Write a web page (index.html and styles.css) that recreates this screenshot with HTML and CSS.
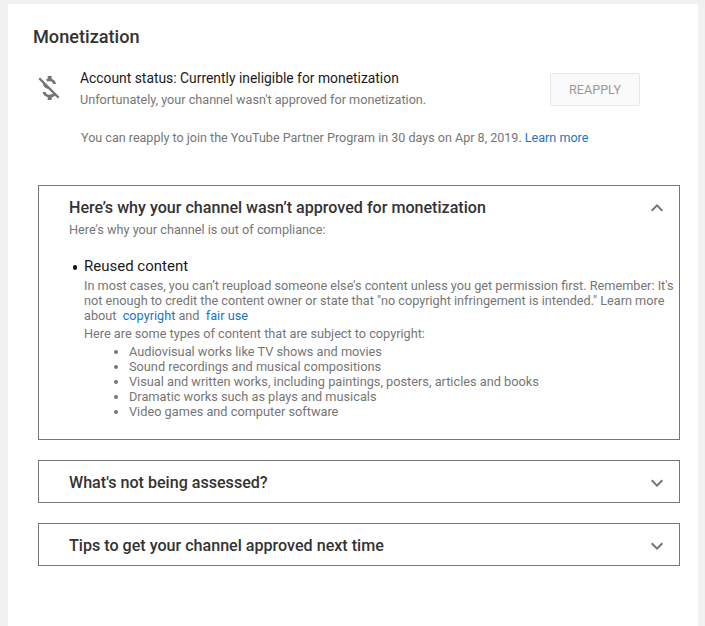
FILE: index.html
```html
<!DOCTYPE html>
<html lang="en">
<head>
<meta charset="utf-8">
<title>Monetization</title>
<link rel="stylesheet" href="styles.css">
</head>
<body>
<main class="card">
  <h1 class="title">Monetization</h1>
  <section class="status">
    <svg class="status-icon" viewBox="0 0 24 24" width="32" height="32"><path d="M12.5 6.9c1.78 0 2.44.85 2.5 2.1h2.21c-.07-1.72-1.12-3.3-3.21-3.81V3h-3v2.16c-.53.12-1.03.3-1.48.54l1.47 1.47c.41-.17.91-.27 1.51-.27zM5.33 4.06L4.06 5.33 7.5 8.77c0 2.08 1.56 3.21 3.91 3.91l3.51 3.51c-.34.48-1.05.91-2.42.91-2.06 0-2.87-.92-2.98-2.1h-2.2c.12 2.19 1.76 3.42 3.68 3.83V21h3v-2.15c.96-.18 1.83-.55 2.46-1.12l2.22 2.22 1.27-1.27L5.33 4.06z"/></svg>
    <div class="status-text">
      <div class="status-head">Account status: Currently ineligible for monetization</div>
      <div class="status-sub">Unfortunately, your channel wasn't approved for monetization.</div>
    </div>
    <button class="reapply" type="button" disabled>REAPPLY</button>
  </section>
  <p class="notice">You can reapply to join the YouTube Partner Program in 30 days on Apr 8, 2019. <a href="#">Learn more</a></p>

  <section class="panel panel-open">
    <div class="panel-head">
      <h2>Here’s why your channel wasn’t approved for monetization</h2>
      <svg class="chev" viewBox="0 0 24 24" width="24" height="24"><path d="M7.41 15.41L12 10.83l4.59 4.58L18 14l-6-6-6 6z"/></svg>
    </div>
    <p class="panel-sub">Here's why your channel is out of compliance:</p>
    <ul class="reasons">
      <li>
        <div class="reason-name">Reused content</div>
        <p class="reason-copy">In most cases, you can’t reupload someone else's content unless you get permission first. Remember: It's not enough to credit the content owner or state that "no copyright infringement is intended." Learn more about&nbsp; <a href="#">copyright</a> and&nbsp; <a href="#">fair use</a></p>
        <p class="reason-lead">Here are some types of content that are subject to copyright:</p>
        <ul class="types">
          <li>Audiovisual works like TV shows and movies</li>
          <li>Sound recordings and musical compositions</li>
          <li>Visual and written works, including paintings, posters, articles and books</li>
          <li>Dramatic works such as plays and musicals</li>
          <li>Video games and computer software</li>
        </ul>
      </li>
    </ul>
  </section>

  <section class="panel">
    <div class="panel-head">
      <h2>What's not being assessed?</h2>
      <svg class="chev" viewBox="0 0 24 24" width="24" height="24"><path d="M7.41 8.59L12 13.17l4.59-4.58L18 10l-6 6-6-6z"/></svg>
    </div>
  </section>

  <section class="panel">
    <div class="panel-head">
      <h2>Tips to get your channel approved next time</h2>
      <svg class="chev" viewBox="0 0 24 24" width="24" height="24"><path d="M7.41 8.59L12 13.17l4.59-4.58L18 10l-6 6-6-6z"/></svg>
    </div>
  </section>
</main>
</body>
</html>
```
FILE: styles.css
```css
* { box-sizing: border-box; }
html, body { height: 100%; }
body {
  margin: 0;
  padding: 4px 7px 0 8px;
  background: #f1f1f1;
  font-family: Roboto, "Liberation Sans", sans-serif;
  overflow: hidden;
}
.card {
  background: #fff;
  height: 622px;
  padding: 21px 18px 0 30px;
}
.title {
  margin: 0 0 0 -5px;
  font-size: 18.15px;
  line-height: 24px;
  font-weight: 500;
  color: #333;
}
.status {
  display: flex;
  align-items: flex-start;
  margin-top: 18px;
}
.status-icon {
  fill: #757575;
  flex: none;
  margin: 5px 15px 0 -5px;
}
.status-text { width: 470px; padding-top: 1px; }
.status-head {
  font-size: 13.87px;
  line-height: 20px;
  color: #1a1a1a;
}
.status-sub {
  margin-top: 2px;
  font-size: 12.65px;
  line-height: 20px;
  color: #767676;
}
.reapply {
  flex: none;
  width: 90px;
  height: 33px;
  margin-top: 6px;
  border: 1px solid #e8e8e8;
  border-radius: 2px;
  background: #fafafa;
  color: #9a9a9a;
  font: 400 12.6px Roboto, sans-serif;
}
.notice {
  margin: 18px 0 37px 43px;
  font-size: 12.55px;
  line-height: 20px;
  color: #767676;
}
a { color: #1a76c4; text-decoration: none; }
.panel {
  border: 1px solid #777;
  margin-bottom: 20px;
}
.panel-head {
  display: flex;
  align-items: center;
  justify-content: space-between;
  height: 41px;
  padding: 2px 10px 0 30px;
}
.panel-head h2 {
  margin: 0;
  font-size: 16.1px;
  line-height: 22px;
  font-weight: 500;
  color: #333;
}
.chev { fill: #757575; flex: none; margin-top: 1px; }
.panel-open { height: 255px; }
.panel-sub {
  margin: -6px 0 0 30px;
  font-size: 12.7px;
  line-height: 18px;
  color: #767676;
}
.reasons {
  list-style: none;
  margin: 17px 0 0;
  padding: 0 0 0 45px;
}
.reasons > li { position: relative; }
.reasons > li::before {
  content: "";
  position: absolute;
  left: -11.5px;
  top: 9px;
  width: 4.5px;
  height: 4.5px;
  border-radius: 50%;
  background: #111;
}
.reason-name {
  font-size: 15px;
  line-height: 20px;
  color: #1a1a1a;
}
.reason-copy {
  margin: 2px 0 0;
  font-size: 12.7px;
  line-height: 15px;
  color: #767676;
}
.reason-lead {
  margin: 3px 0 0;
  font-size: 12.7px;
  line-height: 15px;
  color: #767676;
}
.types {
  list-style: disc;
  margin: 3px 0 0;
  padding: 0 0 0 45px;
  font-size: 12.75px;
  line-height: 15px;
  color: #767676;
}
```
